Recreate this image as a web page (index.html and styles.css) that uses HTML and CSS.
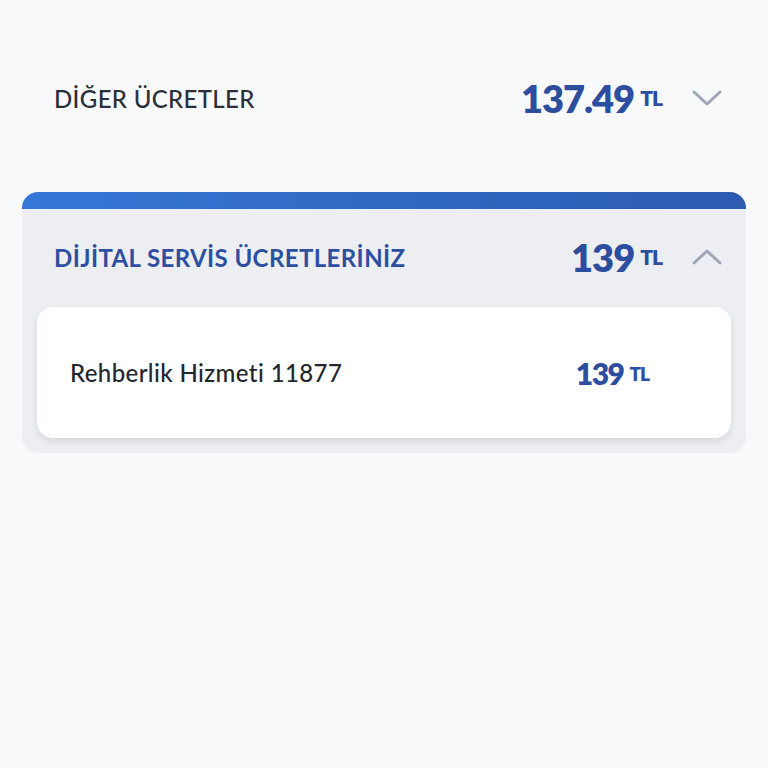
FILE: index.html
```html
<!DOCTYPE html>
<html lang="tr">
<head>
<meta charset="utf-8">
<link rel="stylesheet" href="styles.css">
</head>
<body>
<div class="page">
  <div class="row top">
    <div class="label">DİĞER ÜCRETLER</div>
    <div class="amount big"><span class="num">137.49</span><span class="cur">TL</span></div>
    <svg class="chev" width="32" height="20" viewBox="0 0 32 20"><path d="M3 4 L16 16 L29 4" fill="none" stroke="#a0a5b8" stroke-width="3" stroke-linecap="round" stroke-linejoin="round"/></svg>
  </div>
  <div class="card">
    <div class="bar"></div>
    <div class="row head">
      <div class="label blue">DİJİTAL SERVİS ÜCRETLERİNİZ</div>
      <div class="amount big"><span class="num">139</span><span class="cur">TL</span></div>
      <svg class="chev" width="32" height="20" viewBox="0 0 32 20"><path d="M3 16 L16 4 L29 16" fill="none" stroke="#a0a5b8" stroke-width="3" stroke-linecap="round" stroke-linejoin="round"/></svg>
    </div>
    <div class="inner">
      <div class="item">Rehberlik Hizmeti 11877</div>
      <div class="amount small"><span class="num">139</span><span class="cur">TL</span></div>
    </div>
  </div>
</div>
</body>
</html>
```
FILE: styles.css
```css
html, body { margin: 0; padding: 0; }
body {
  background: #f8f9fa;
  font-family: "Lato", "Noto Sans", sans-serif;
  width: 768px; height: 768px;
}
.page { padding: 72px 22px 0 22px; }
.row { display: flex; align-items: center; }
.top { padding: 0 23px 0 32px; height: 52px; }
.label { flex: 1; font-size: 24px; color: #2b2f3a; letter-spacing: 0.35px; font-weight: 500; }
.label.blue { color: #2e4fa0; font-weight: 700; letter-spacing: 0.4px; }
.amount { display: flex; align-items: flex-start; color: #2d4d9f; font-weight: 800; line-height: 1; }
.amount .num { letter-spacing: -1px; }
.amount.big .num { font-size: 38px; }
.amount .cur { font-size: 21px; margin-left: 6px; font-weight: 800; letter-spacing: -1px; }
.amount.big .cur { margin-top: 8px; }
.chev { margin-left: 29px; }
.card {
  margin-top: 68px;
  background: #eceef2;
  border-radius: 16px;
  overflow: hidden;
  padding-bottom: 15px;
}
.bar { height: 17px; background: linear-gradient(90deg, #3577d6, #2c5bb0); }
.head { height: 100px; padding: 0 23px 0 32px; margin-top: -2px; }
.inner {
  margin: 0 15px;
  background: #ffffff;
  border-radius: 16px;
  height: 131px;
  display: flex; align-items: center;
  padding: 0 82px 0 33px;
  box-shadow: 0 3px 6px rgba(0,0,0,0.10);
}
.item { flex: 1; font-size: 24px; color: #23262e; letter-spacing: 0.4px; font-weight: 500; }
.amount.small .num { font-size: 30px; letter-spacing: -1.5px; }
.amount.small .cur { font-size: 19px; margin-top: 6px; }
```
